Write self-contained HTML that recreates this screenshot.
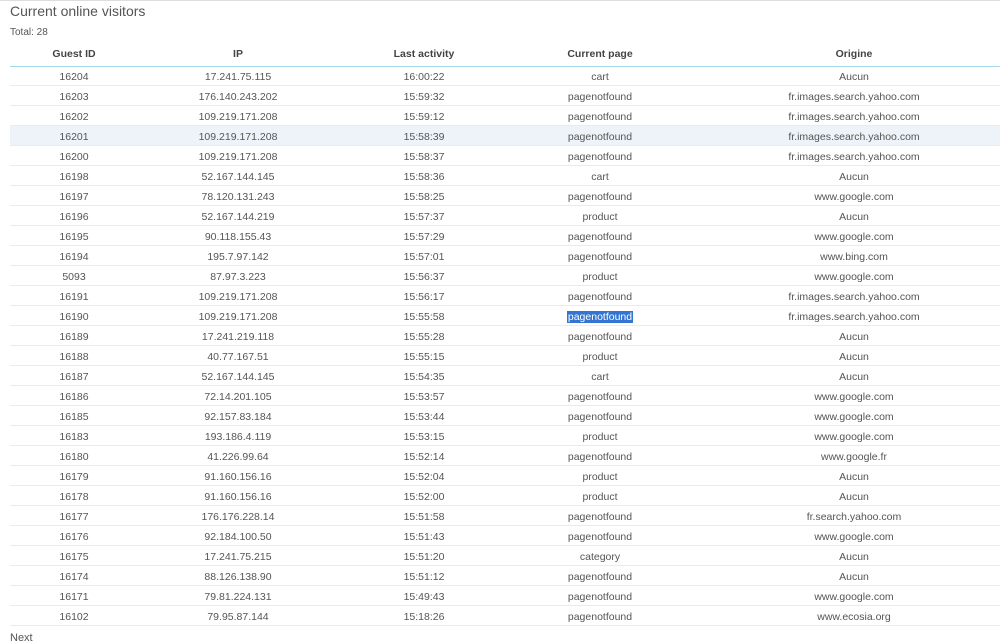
<!DOCTYPE html><html><head><style>
body{margin:0;width:1000px;height:638px;overflow:hidden;background:#fff;font-family:"Liberation Sans",sans-serif;color:#555;font-size:10.5px;position:relative}
.top{position:absolute;left:0;top:0;width:1000px;height:1px;background:#ddd}
h1{position:absolute;left:10px;top:3px;margin:0;font-weight:normal;font-size:14px;color:#555}
.tot{position:absolute;left:10px;top:27px;font-size:10px;color:#555}
.r{position:absolute;left:10px;width:990px;height:20px;border-bottom:1px solid #e9ecef;box-sizing:border-box}
.r span{position:absolute;top:5px;width:200px;text-align:center;white-space:nowrap}
.h{font-weight:bold;color:#444;border-bottom:1px solid #a6d8ef}
.h span{top:1px}
.hl{background:#edf3f8}
.sel{background:#3475d1;color:#fff;padding:0 1px}
.next{position:absolute;left:10px;top:632px;font-size:11px}
</style></head><body>
<div class="top"></div>
<h1>Current online visitors</h1>
<div class="tot">Total: 28</div>
<div class="r h" style="top:47px"><span style="left:-36px">Guest ID</span><span style="left:128px">IP</span><span style="left:314px">Last activity</span><span style="left:490px">Current page</span><span style="left:744px">Origine</span></div>
<div id="rows"></div>
<div class="next">Next</div>
<script>
var d=[["16204","17.241.75.115","16:00:22","cart","Aucun"],["16203","176.140.243.202","15:59:32","pagenotfound","fr.images.search.yahoo.com"],["16202","109.219.171.208","15:59:12","pagenotfound","fr.images.search.yahoo.com"],["16201","109.219.171.208","15:58:39","pagenotfound","fr.images.search.yahoo.com"],["16200","109.219.171.208","15:58:37","pagenotfound","fr.images.search.yahoo.com"],["16198","52.167.144.145","15:58:36","cart","Aucun"],["16197","78.120.131.243","15:58:25","pagenotfound","www.google.com"],["16196","52.167.144.219","15:57:37","product","Aucun"],["16195","90.118.155.43","15:57:29","pagenotfound","www.google.com"],["16194","195.7.97.142","15:57:01","pagenotfound","www.bing.com"],["5093","87.97.3.223","15:56:37","product","www.google.com"],["16191","109.219.171.208","15:56:17","pagenotfound","fr.images.search.yahoo.com"],["16190","109.219.171.208","15:55:58","pagenotfound","fr.images.search.yahoo.com"],["16189","17.241.219.118","15:55:28","pagenotfound","Aucun"],["16188","40.77.167.51","15:55:15","product","Aucun"],["16187","52.167.144.145","15:54:35","cart","Aucun"],["16186","72.14.201.105","15:53:57","pagenotfound","www.google.com"],["16185","92.157.83.184","15:53:44","pagenotfound","www.google.com"],["16183","193.186.4.119","15:53:15","product","www.google.com"],["16180","41.226.99.64","15:52:14","pagenotfound","www.google.fr"],["16179","91.160.156.16","15:52:04","product","Aucun"],["16178","91.160.156.16","15:52:00","product","Aucun"],["16177","176.176.228.14","15:51:58","pagenotfound","fr.search.yahoo.com"],["16176","92.184.100.50","15:51:43","pagenotfound","www.google.com"],["16175","17.241.75.215","15:51:20","category","Aucun"],["16174","88.126.138.90","15:51:12","pagenotfound","Aucun"],["16171","79.81.224.131","15:49:43","pagenotfound","www.google.com"],["16102","79.95.87.144","15:18:26","pagenotfound","www.ecosia.org"]];
var L=[-36,128,314,490,744],h="";
d.forEach(function(r,i){h+='<div class="r'+(i==3?' hl':'')+'" style="top:'+(66+i*20)+'px">';r.forEach(function(c,j){h+='<span style="left:'+L[j]+'px">'+(i==12&&j==3?'<b class="sel" style="font-weight:normal">'+c+'</b>':c)+'</span>'});h+='</div>'});
document.getElementById('rows').innerHTML=h;
</script>
</body></html>
